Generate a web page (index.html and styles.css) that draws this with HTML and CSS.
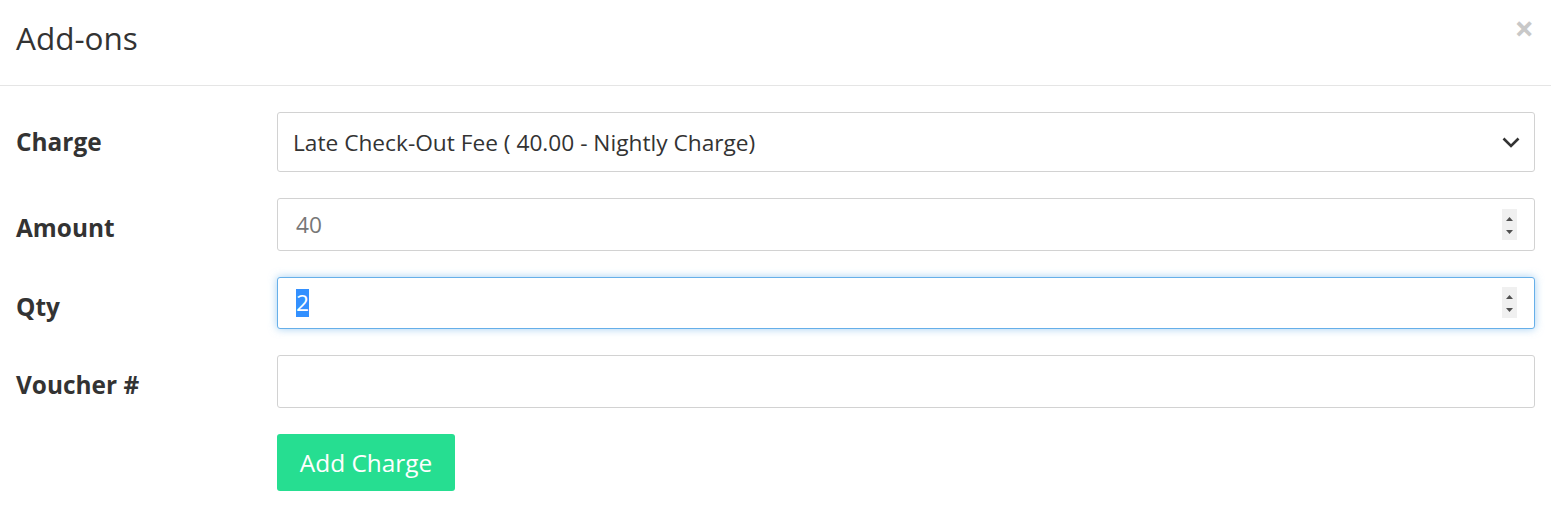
FILE: index.html
```html
<!DOCTYPE html>
<html>
<head>
<meta charset="utf-8">
<link rel="stylesheet" href="styles.css">
</head>
<body>
<div class="modal">
  <div class="modal-header">
    <h4 class="modal-title">Add-ons</h4>
    <span class="close">&times;</span>
  </div>
  <div class="modal-body">
    <div class="form-row">
      <label class="label">Charge</label>
      <div class="control select">
        <span class="value">Late Check-Out Fee ( 40.00 - Nightly Charge)</span>
        <svg class="chevron" width="18" height="11" viewBox="0 0 18 11"><path d="M1.5 1.5 L9 9 L16.5 1.5" fill="none" stroke="#333" stroke-width="2.6"/></svg>
      </div>
    </div>
    <div class="form-row">
      <label class="label">Amount</label>
      <div class="control input">
        <span class="value muted">40</span>
        <span class="spinner"><svg width="15" height="31" viewBox="0 0 15 31"><path d="M4 12 L7.5 8 L11 12 Z" fill="#505050"/><path d="M4 21 L7.5 25 L11 21 Z" fill="#505050"/></svg></span>
      </div>
    </div>
    <div class="form-row">
      <label class="label">Qty</label>
      <div class="control input focused">
        <span class="value"><span class="selected">2</span></span>
        <span class="spinner"><svg width="15" height="31" viewBox="0 0 15 31"><path d="M4 12 L7.5 8 L11 12 Z" fill="#505050"/><path d="M4 21 L7.5 25 L11 21 Z" fill="#505050"/></svg></span>
      </div>
    </div>
    <div class="form-row">
      <label class="label">Voucher #</label>
      <div class="control input"></div>
    </div>
    <div class="form-row">
      <span class="label"></span>
      <div><button class="btn">Add Charge</button></div>
    </div>
  </div>
</div>
</body>
</html>
```
FILE: styles.css
```css
html, body {
  margin: 0;
  padding: 0;
  background: #fff;
}
body {
  font-family: "Open Sans", "Liberation Sans", sans-serif;
  color: #333;
  width: 1551px;
  height: 510px;
  overflow: hidden;
}
.modal-header {
  height: 86px;
  border-bottom: 1px solid #e5e5e5;
  display: flex;
  align-items: flex-start;
  justify-content: space-between;
  padding: 0 17px 0 16px;
  box-sizing: border-box;
}
.modal-title {
  margin: 0;
  font-size: 31.5px;
  font-weight: 400;
  line-height: 1;
  padding-top: 22px;
  color: #333;
}
.close {
  font-size: 34px;
  font-weight: 700;
  color: #c8c8c8;
  line-height: 1;
  padding-top: 11px;
}
.modal-body {
  padding: 26px 16px 0 16px;
  display: flex;
  flex-direction: column;
  gap: 26px;
}
.form-row {
  display: grid;
  grid-template-columns: 261px 1fr;
  align-items: start;
}
.label {
  font-size: 24.4px;
  font-weight: 700;
  color: #333;
  padding-top: 13px;
  line-height: 1.4;
}
.control {
  border: 1px solid #d2d2d2;
  border-radius: 3px;
  box-sizing: border-box;
  display: flex;
  align-items: center;
  justify-content: space-between;
  padding: 0 18px 0 15px;
  background: #fff;
}
.select {
  height: 60px;
  padding-right: 14px;
}
.input {
  height: 52.5px;
  padding-right: 17px;
}
.value {
  font-size: 22.7px;
  color: #333;
}
.input .value {
  padding-left: 3px;
}
.muted {
  color: #777;
}
.selected {
  background: #3390ff;
  color: #fff;
  display: inline-block;
  line-height: 28px;
}
.focused {
  border-color: #66afe9;
  box-shadow: 0 0 8px rgba(102, 175, 233, 0.6);
}
.spinner {
  display: flex;
  background: #f0f0f0;
  width: 15px;
  height: 31px;
}
.chevron {
  display: block;
}
.btn {
  font-family: "Open Sans", "Liberation Sans", sans-serif;
  font-size: 24.4px;
  color: #fff;
  background: #26de91;
  border: none;
  border-radius: 3px;
  height: 57.5px;
  width: 178px;
  padding: 0;
  cursor: pointer;
}
```
